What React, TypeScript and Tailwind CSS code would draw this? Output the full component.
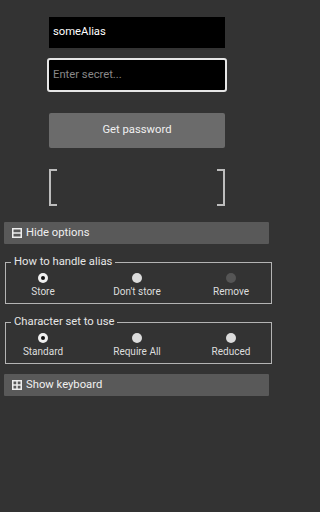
import React from 'react';

type Opt = { label: string; state: 'on' | 'off' | 'disabled' };

const Radio = ({ state }: { state: Opt['state'] }) => {
  if (state === 'on')
    return (
      <span className="flex h-[10px] w-[10px] items-center justify-center rounded-full bg-[#f0f0f0]">
        <span className="h-[4px] w-[4px] rounded-full bg-[#111]" />
      </span>
    );
  if (state === 'disabled') return <span className="h-[10px] w-[10px] rounded-full bg-[#555]" />;
  return <span className="h-[10px] w-[10px] rounded-full bg-[#dcdcdc]" />;
};

const Group = ({ legend, options }: { legend: string; options: Opt[] }) => (
  <fieldset className="ml-[5px] mr-[6px] border border-[#b4b4b4] px-0 pb-[5px] pt-0">
    <legend className="ml-[5px] px-[3px] text-[11.25px] leading-[14px] text-[#e6e6e6]">{legend}</legend>
    <div className="-ml-[3px] mt-[4px] flex gap-[14px]">
      {options.map((o) => (
        <div key={o.label} className="flex w-[80px] flex-col items-center">
          <Radio state={o.state} />
          <span className="mt-[2px] text-[10px] leading-[13px] text-[#dedede]">{o.label}</span>
        </div>
      ))}
    </div>
  </fieldset>
);

const Bar = ({ label, icon }: { label: string; icon: 'minus' | 'plus' }) => (
  <div className="ml-1 mr-[5px] flex h-[22px] items-center rounded-[1px] bg-[#595959] pl-[8px]">
    <svg width="10" height="10" viewBox="0 0 10 10" className="mr-[4px]">
      <rect x="0.75" y="0.75" width="8.5" height="8.5" fill="none" stroke="#eee" strokeWidth="1.5" />
      <line x1="1" y1="5" x2="9" y2="5" stroke="#eee" strokeWidth="1.5" />
      {icon === 'plus' && <line x1="5" y1="1" x2="5" y2="9" stroke="#eee" strokeWidth="1.5" />}
    </svg>
    <span className="text-[11.25px] text-[#f0f0f0]">{label}</span>
  </div>
);

const Bracket = ({ side }: { side: 'l' | 'r' }) => (
  <div
    className={
      side === 'l'
        ? 'h-[37px] w-[8px] border-y-2 border-l-2 border-[#bdbdbd]'
        : 'h-[37px] w-[8px] border-y-2 border-r-2 border-[#bdbdbd]'
    }
  />
);

export default function App() {
  return (
    <div className="h-[512px] w-full bg-[#333333] font-['Roboto',sans-serif]">
      <div className="w-[274px]">
        <div className="mx-auto flex w-[176px] flex-col pt-[17px]">
          <div className="flex h-[31px] items-center bg-black pl-[4px] text-[11.25px] text-white">someAlias</div>
          <div className="-mx-[2px] mt-[10px] flex h-[34px] items-center rounded-[3px] border-2 border-[#e6e6e6] bg-black pl-[4px]">
            <span className="text-[11.25px] text-[#888]">Enter secret...</span>
          </div>
          <button className="mt-[21px] h-[35px] rounded-[2px] bg-[#6b6b6b] text-[11.25px] text-[#f0f0f0]">
            Get password
          </button>
          <div className="mt-[21px] flex justify-between">
            <Bracket side="l" />
            <Bracket side="r" />
          </div>
        </div>
        <div className="mt-[16px]">
          <Bar label="Hide options" icon="minus" />
        </div>
        <div className="mt-[11px]">
          <Group
            legend="How to handle alias"
            options={[
              { label: 'Store', state: 'on' },
              { label: "Don't store", state: 'off' },
              { label: 'Remove', state: 'disabled' },
            ]}
          />
        </div>
        <div className="mt-[11px]">
          <Group
            legend="Character set to use"
            options={[
              { label: 'Standard', state: 'on' },
              { label: 'Require All', state: 'off' },
              { label: 'Reduced', state: 'off' },
            ]}
          />
        </div>
        <div className="mt-[10px]">
          <Bar label="Show keyboard" icon="plus" />
        </div>
      </div>
    </div>
  );
}
